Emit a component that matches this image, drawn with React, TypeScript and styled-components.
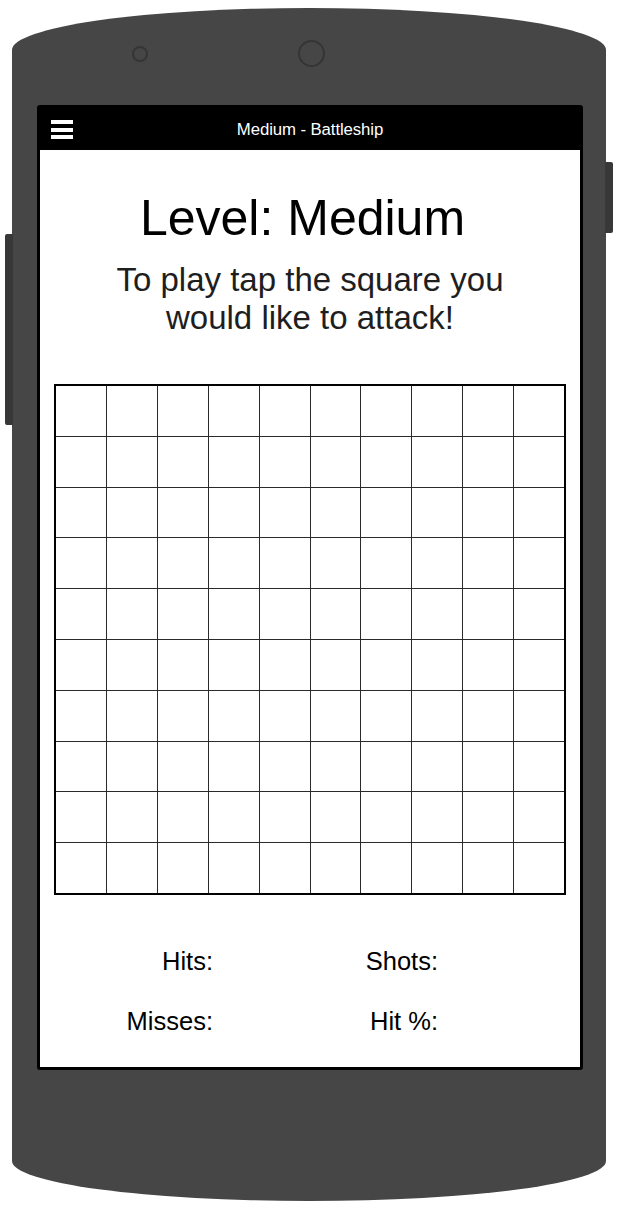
import React from "react";
import styled, { createGlobalStyle } from "styled-components";

const GlobalStyle = createGlobalStyle`
  html, body {
    margin: 0;
    padding: 0;
    background: #ffffff;
  }
  body {
    font-family: "Liberation Sans", Arial, Helvetica, sans-serif;
  }
`;

const Page = styled.div`
  width: 618px;
  height: 1207px;
  padding-top: 8px;
  box-sizing: border-box;
  overflow: hidden;
`;

const Phone = styled.div`
  position: relative;
  width: 594px;
  height: 1193px;
  margin-left: 12px;
  background: #464646;
  border-radius: 50% 50% 50% 50% / 42px 42px 40px 40px;
  display: flex;
  flex-direction: column;
`;

const SideButton = styled.div<{ $side: "left" | "right"; $top: number; $height: number }>`
  position: absolute;
  top: ${(p) => p.$top}px;
  height: ${(p) => p.$height}px;
  width: 8px;
  background: #383838;
  ${(p) =>
    p.$side === "left"
      ? "left: -7px; border-radius: 2px 0 0 2px;"
      : "right: -7px; border-radius: 0 2px 2px 0;"}
`;

const TopBezel = styled.div`
  height: 97px;
  display: flex;
  align-items: center;
  padding-left: 120px;
  gap: 150px;
  padding-bottom: 6px;
  box-sizing: border-box;
`;

const Lens = styled.div<{ $size: number }>`
  width: ${(p) => p.$size}px;
  height: ${(p) => p.$size}px;
  border-radius: 50%;
  border: 2px solid #353535;
  box-sizing: border-box;
`;

const Screen = styled.div`
  margin-left: 25px;
  width: 546px;
  height: 965px;
  box-sizing: border-box;
  border: 3px solid #000;
  border-radius: 3px;
  background: #fff;
  display: flex;
  flex-direction: column;
`;

const Header = styled.div`
  height: 42px;
  background: #000;
  display: grid;
  grid-template-columns: 1fr auto 1fr;
  align-items: center;
  padding: 0 11px;
`;

const Burger = styled.div`
  display: flex;
  flex-direction: column;
  gap: 3.5px;
  width: 22px;
  margin-top: 1px;
`;

const BurgerBar = styled.span`
  display: block;
  height: 4px;
  background: #fff;
`;

const Title = styled.div`
  color: #fff;
  font-size: 16.8px;
  letter-spacing: -0.1px;
  margin-top: 1px;
`;

const Content = styled.div`
  display: flex;
  flex-direction: column;
  align-items: center;
`;

const Heading = styled.h1`
  margin: 43px 0 0;
  padding-right: 15px;
  font-size: 50px;
  line-height: 50px;
  font-weight: normal;
  color: #000;
`;

const Instructions = styled.p`
  margin: 18px 0 0;
  font-size: 33px;
  line-height: 38px;
  text-align: center;
  color: #1e1e1e;
`;

const Board = styled.div`
  margin-top: 47px;
  width: 512px;
  height: 511px;
  box-sizing: border-box;
  border: 2px solid #000;
  display: grid;
  grid-template-columns: repeat(10, 1fr);
  grid-template-rows: repeat(10, 1fr);
  gap: 1px;
  background: #2a2a2a;
`;

const Cell = styled.div`
  background: #fff;
`;

const Stats = styled.div`
  align-self: stretch;
  margin-top: 51px;
  display: grid;
  grid-template-columns: 173px 225px;
  row-gap: 30px;
`;

const StatLabel = styled.div`
  font-size: 25.5px;
  line-height: 30px;
  text-align: right;
  color: #000;
`;

const cells = Array.from({ length: 100 }, (_, i) => i);

export default function App() {
  return (
    <>
      <GlobalStyle />
      <Page>
        <Phone>
          <SideButton $side="left" $top={226} $height={191} />
          <SideButton $side="right" $top={154} $height={71} />
          <TopBezel>
            <Lens $size={16} />
            <Lens $size={27} />
          </TopBezel>
          <Screen>
            <Header>
              <Burger>
                <BurgerBar />
                <BurgerBar />
                <BurgerBar />
              </Burger>
              <Title>Medium - Battleship</Title>
              <span />
            </Header>
            <Content>
              <Heading>Level: Medium</Heading>
              <Instructions>
                To play tap the square you
                <br />
                would like to attack!
              </Instructions>
              <Board>
                {cells.map((c) => (
                  <Cell key={c} />
                ))}
              </Board>
              <Stats>
                <StatLabel>Hits:</StatLabel>
                <StatLabel>Shots:</StatLabel>
                <StatLabel>Misses:</StatLabel>
                <StatLabel>Hit %:</StatLabel>
              </Stats>
            </Content>
          </Screen>
        </Phone>
      </Page>
    </>
  );
}
